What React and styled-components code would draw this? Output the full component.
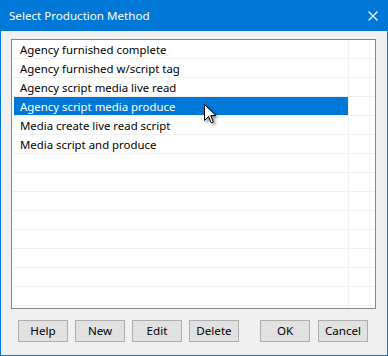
import React from "react"
import styled, { createGlobalStyle } from "styled-components"

const GlobalStyle = createGlobalStyle`
  html, body {
    margin: 0;
    padding: 0;
    background: #ffffff;
  }
  body {
    font-family: "Noto Sans", "Liberation Sans", sans-serif;
    font-size: 11.4px;
  }
`

const Window = styled.div`
  position: relative;
  width: 388px;
  height: 356px;
  box-sizing: border-box;
  border: 1px solid #0078d7;
  background: #f0f0f0;
  display: flex;
  flex-direction: column;
`

const TitleBar = styled.div`
  height: 30px;
  background: #0078d7;
  color: #ffffff;
  display: flex;
  align-items: center;
  justify-content: space-between;
  padding-left: 8px;
  flex: none;
`

const Title = styled.span`
  font-size: 11.6px;
  line-height: 16px;
`

const CloseBox = styled.div`
  width: 28px;
  height: 30px;
  display: flex;
  align-items: center;
  justify-content: center;
`

const Body = styled.div`
  padding: 8px 10px 0 10px;
  display: flex;
  flex-direction: column;
`

const ListBox = styled.div`
  width: 365px;
  height: 270px;
  box-sizing: border-box;
  border: 1px solid #828790;
  background: #ffffff;
  overflow: hidden;
`

const Row = styled.div`
  display: flex;
  height: 18px;
  border-bottom: 1px solid #f0f0f0;
`

const NameCell = styled.div`
  width: 336px;
  border-right: 1px solid #f0f0f0;
  display: flex;
`

const Label = styled.div`
  flex: 1;
  margin-left: 2px;
  padding: 1px 0 0 6px;
  line-height: 17px;
  white-space: nowrap;
  color: ${(p) => (p.$selected ? "#ffffff" : "#000000")};
  background: ${(p) => (p.$selected ? "#0078d7" : "transparent")};
`

const ButtonRow = styled.div`
  display: flex;
  gap: 7px;
  margin-top: 11px;
  padding-left: 7px;
`

const Button = styled.button`
  width: 50px;
  height: 22px;
  box-sizing: border-box;
  padding: 0;
  border: 1px solid #adadad;
  background: #e1e1e1;
  color: #000000;
  font-family: "Noto Sans", "Liberation Sans", sans-serif;
  font-size: 11.6px;
  line-height: 18px;
  margin-left: ${(p) => p.$space || 0}px;
`

const Pointer = styled.svg`
  position: absolute;
  left: 203px;
  top: 103px;
  filter: drop-shadow(2px 2px 1.5px rgba(0, 0, 0, 0.45));
`

const items = [
  "Agency furnished complete",
  "Agency furnished w/script tag",
  "Agency script media live read",
  "Agency script media produce",
  "Media create live read script",
  "Media script and produce",
]

const rows = Array.from({ length: 15 }, (_, i) => items[i] || "")

export default function App() {
  return (
    <>
      <GlobalStyle />
      <Window>
        <TitleBar>
          <Title>Select Production Method</Title>
          <CloseBox>
            <svg width="10" height="10" viewBox="0 0 10 10">
              <path d="M0.5 0.5 L9.5 9.5 M9.5 0.5 L0.5 9.5" stroke="#ffffff" strokeWidth="1.1" />
            </svg>
          </CloseBox>
        </TitleBar>
        <Body>
          <ListBox>
            {rows.map((name, i) => (
              <Row key={i}>
                <NameCell>
                  <Label $selected={i === 3}>{name}</Label>
                </NameCell>
              </Row>
            ))}
          </ListBox>
          <ButtonRow>
            <Button>Help</Button>
            <Button>New</Button>
            <Button>Edit</Button>
            <Button>Delete</Button>
            <Button $space={14}>OK</Button>
            <Button $space={1}>Cancel</Button>
          </ButtonRow>
        </Body>
        <Pointer width="14" height="22" viewBox="0 0 14 22">
          <path
            d="M0.5 0.5 L0.5 16.5 L4.5 12.5 L7.2 18.8 L9.3 17.9 L6.7 11.6 L12 11.6 Z"
            fill="#ffffff"
            stroke="#000000"
            strokeWidth="1"
            strokeLinejoin="miter"
          />
        </Pointer>
      </Window>
    </>
  )
}
